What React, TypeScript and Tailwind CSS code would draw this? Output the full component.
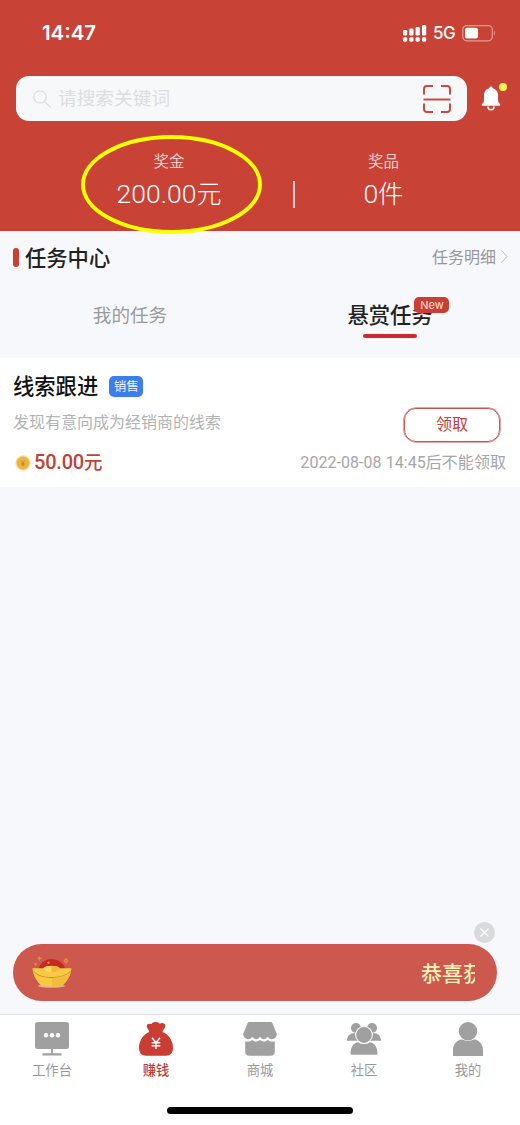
import React from "react";

const font = "font-[Inter,'Noto_Sans_CJK_SC',sans-serif]";
const numberFont = "font-[Roboto,'Noto_Sans_CJK_SC',sans-serif]";

const StatusIcons: React.FC = () => (
  <div className="flex items-center">
    <svg width="24" height="17" viewBox="0 0 24 17" fill="#fff">
      <rect x="0" y="5" width="4.200" height="5.500" rx="1.200" />
      <rect x="6.300" y="3.500" width="4.200" height="7" rx="1.200" />
      <rect x="12.600" y="2" width="4.200" height="8.500" rx="1.200" />
      <rect x="19" y="0" width="4.200" height="10.500" rx="1.200" />
      <rect x="0" y="12.200" width="4.200" height="4.500" rx="1.400" />
      <rect x="6.300" y="12.200" width="4.200" height="4.500" rx="1.400" />
      <rect x="12.600" y="12.200" width="4.200" height="4.500" rx="1.400" />
      <rect x="19" y="12.200" width="4.200" height="4.500" rx="1.400" />
    </svg>
    <span className="ml-[6px] w-[23px] text-[17px] leading-5 font-medium tracking-[-0.500px]">5G</span>
    <svg className="ml-[6px]" width="34" height="17" viewBox="0 0 34 17">
      <rect x="0.800" y="0.600" width="29.500" height="15.200" rx="4" fill="none" stroke="#e39d95" strokeWidth="1.200" />
      <rect x="3" y="2.800" width="13" height="10.800" rx="2" fill="#fff" />
      <path d="M32 5.600q2 2.700 0 5.200z" fill="#e39d95" />
    </svg>
  </div>
);

const ScanIcon: React.FC = () => (
  <svg width="28" height="28" viewBox="0 0 28 28" fill="none" stroke="#c84a40" strokeWidth="2">
    <path d="M1 9.500V4q0-3 3-3h6M18 1h6q3 0 3 3v5.500M1 18.500V24q0 3 3 3h6M18 27h6q3 0 3-3v-5.500M0.500 14.500h27" />
  </svg>
);

const BellIcon: React.FC = () => (
  <svg width="20" height="26" viewBox="0 0 20 26" fill="#fff">
    <path d="M10 0.500c1 0 1.700.7 1.700 1.700 3.500.8 5.300 3.700 5.300 7.300v5c0 2.200 2.300 3.300 2.300 4.500 0 .5-.3.800-.9.800H1.600c-.6 0-.9-.3-.9-.8 0-1.200 2.300-2.300 2.300-4.500v-5c0-3.600 1.800-6.500 5.300-7.300 0-1 .7-1.700 1.700-1.700z" />
    <path d="M7 20.500a3 3.300 0 0 0 6 0" fill="none" stroke="#fff" strokeWidth="1.600" />
  </svg>
);

const CoinIcon: React.FC = () => (
  <svg width="16" height="16" viewBox="0 0 16 16">
    <circle cx="8" cy="8" r="7.700" fill="#fae3a0" />
    <circle cx="8" cy="8" r="6.500" fill="#ebb443" />
    <path d="M6.200 5.500l1.800 2.300 1.800-2.300M8 7.800V11M6.500 8.300h3M6.500 9.700h3" stroke="#bc7c20" strokeWidth="0.800" fill="none" />
  </svg>
);

const IngotIcon: React.FC = () => (
  <svg width="40" height="34" viewBox="0 0 40 34">
    <ellipse cx="19.500" cy="30" rx="13.500" ry="1.700" fill="#dcaaa6" />
    <path d="M6 14C8 7 13 3 19.500 3S32 7 33.500 14z" fill="#c42a20" />
    <path d="M0.500 12.200H11C14 9 25 9 28 12.200H39.300C39.300 18 36 25 29 30.500H10.500C4 25 0.500 18 0.500 12.200z" fill="#f8c942" />
    <path d="M11 12.500C14 9 25 9 28 12.500c-2 5-15 5-17 0z" fill="#fcd75b" />
    <path d="M19.500 10c5 0 7 1 8.500 2.500-1 2.500-4 3.500-8.500 4z" fill="#f2b63a" />
    <path d="M1 14.500C8 23.300 31 23.300 39 14.500v1C31 24 8 24 1.300 15.500z" fill="#c98a28" />
    <path d="M20 22c7 0 13-2 18.500-5.500C37 22 34 26.500 29 30.500h-9z" fill="#f3bd3c" />
    <g fill="none" stroke="#e58e36" strokeWidth="1.300">
      <path d="M7.500 0.500v4M5.500 2.500h4M3.500 7v2.500M2.200 8.200h2.600M16.500 5.500v2.500M15.200 6.700h2.600" />
      <path d="M34 2.700l1.800 2-1.800 2-1.800-2z" />
    </g>
  </svg>
);

const DeskIcon: React.FC = () => (
  <svg width="34" height="34" viewBox="0 0 34 34" fill="#a0a0a0">
    <rect width="34" height="27" rx="2.500" />
    <path d="M16 26h2v5.300h8.500V33.500H7.500V31.300H16z" />
    <g fill="#fff">
      <circle cx="11" cy="13.200" r="2.200" />
      <circle cx="17" cy="13.200" r="2.200" />
      <circle cx="23" cy="13.200" r="2.200" />
    </g>
  </svg>
);

const MoneyIcon: React.FC = () => (
  <svg width="34" height="34" viewBox="0 0 34 34">
    <path
      d="M10.300 10C10 7.500 7.500 6.300 7.700 4 7.900 1.800 10.300 1.200 12.500 2 14-.5 19-.5 20.800 1.800 23 .3 26.500 1.300 26.300 4 26.200 6.500 23.900 7.500 23.500 10 30 12.500 34 19 34 25.500 34 31 31.500 33.700 27 33.700H7C2.500 33.700 0 31 0 25.500 0 19 4 12.500 10.300 10z"
      fill="#c93d32"
    />
    <path d="M13 15.800l4 5 4-5M17 20.800v6.200M12.700 20.800h8.600M12.700 23.800h8.600" stroke="#fff" strokeWidth="1.400" fill="none" />
  </svg>
);

const ShopIcon: React.FC = () => (
  <svg width="34" height="34" viewBox="0 0 34 34" fill="#a0a0a0">
    <path d="M6.500 0h21q1.500 0 2 1.200L33.700 11.500C34 15 31.500 17.200 29 17.200q-2.500 0-4.300-2.500Q23 17.200 20.800 17.200T17 14.700Q15.400 17.200 13.200 17.200T9.300 14.700Q7.500 17.200 5 17.200C2.500 17.200 0 15 .3 11.500L4.500 1.200Q5 0 6.500 0z" />
    <path d="M2.200 19.200q4 1.300 7-1.200 3.800 3.200 7.800 0 4 3.200 7.800 0 3 2.500 7 1.200V29.500q0 4.300-4.300 4.300h-21q-4.300 0-4.300-4.300z" />
  </svg>
);

const GroupIcon: React.FC = () => (
  <svg width="34" height="34" viewBox="0 0 34 34" fill="#a0a0a0">
    <circle cx="9" cy="6" r="5" />
    <circle cx="25" cy="6" r="5" />
    <path d="M0 18.800C0 14 3 11 8 11l3 7.800zM34 18.800C34 14 31 11 26 11l-3 7.800z" />
    <circle cx="17" cy="13" r="8.900" fill="#fff" />
    <circle cx="17" cy="13" r="7.900" />
    <path d="M3.500 31.500C3.500 25 7 20.500 11 20.200q6 3.800 12 0c4 .3 7.500 4.800 7.500 11.300q0 1.200-1.200 1.200H4.700q-1.200 0-1.200-1.200z" />
  </svg>
);

const UserIcon: React.FC = () => (
  <svg width="34" height="34" viewBox="0 0 34 34" fill="#a0a0a0">
    <circle cx="17" cy="9.200" r="9.200" />
    <path d="M2 34V28C2 22 6 18 11 17.500q6 2.800 12 0C28 18 32 22 32 28v6z" />
  </svg>
);

const navItems = [
  { label: "工作台", icon: <DeskIcon /> },
  { label: "赚钱", icon: <MoneyIcon />, active: true },
  { label: "商城", icon: <ShopIcon /> },
  { label: "社区", icon: <GroupIcon /> },
  { label: "我的", icon: <UserIcon /> },
];

const Header: React.FC = () => (
  <header className="h-[231px] bg-[#c84235] text-white">
    <div className="flex h-[76px] items-start justify-between pt-[23px] pr-[24px] pl-[42px]">
      <span className="text-[20.400px] leading-5 font-semibold">14:47</span>
      <StatusIcons />
    </div>

    <div className="flex h-[45px] items-center pl-4">
      <div className="flex h-[45px] w-[451px] items-center rounded-[13px] bg-[#f7f8fa] pr-4 pl-[17px]">
        <svg width="18" height="18" viewBox="0 0 18 18" fill="none" stroke="#dcdde0" strokeWidth="1.300">
          <circle cx="7" cy="7" r="6.200" />
          <path d="M11.500 11.500l6 6" />
        </svg>
        <span className="ml-[7px] flex-1 text-[18.700px] leading-6 text-[#dcdde0]">请搜索关键词</span>
        <ScanIcon />
      </div>
      <div className="relative ml-[14px]">
        <BellIcon />
        <span className="absolute -top-[3px] left-[18px] h-2 w-2 rounded-full bg-[#fdf551]" />
      </div>
    </div>

    <div className="relative flex h-[110px] pt-[31px]">
      <div className="ml-[69px] w-[200px] text-center">
        <p className="text-[15.500px] leading-5 text-[#f2cfcb]">奖金</p>
        <p className={`mt-[6px] text-[26.500px] leading-8 font-light ${numberFont}`}>
          200.00<span className="text-[25px]">元</span>
        </p>
      </div>
      <div className="mt-[29px] ml-6 h-[27px] w-[1.500px] bg-[#f0d0cc]" />
      <div className="ml-[-11px] w-[200px] text-center">
        <p className="text-[15.500px] leading-5 text-[#f2cfcb]">奖品</p>
        <p className={`mt-[6px] text-[26.500px] leading-8 font-light ${numberFont}`}>
          0<span className="text-[25.500px]">件</span>
        </p>
      </div>
      <svg className="absolute top-[14px] left-[80px]" width="184" height="100" viewBox="0 0 184 100">
        <ellipse cx="91.500" cy="49.500" rx="88.500" ry="47.500" fill="none" stroke="#ffff00" strokeWidth="4" />
      </svg>
    </div>
  </header>
);

const App: React.FC = () => {
  return (
    <div className={`flex h-[1125px] w-[520px] flex-col overflow-hidden bg-[#f7f8fc] whitespace-nowrap ${font}`}>
      <Header />

      <div className="flex h-[53px] items-center justify-between pr-3 pl-[13px]">
        <div className="flex items-center">
          <span className="h-[19px] w-[6px] rounded-full bg-[#cc3d32]" />
          <h2 className="ml-[6px] text-[21.300px] leading-6 font-medium text-[#222]">任务中心</h2>
        </div>
        <div className="flex items-center pb-[2px] text-[16px] leading-5 text-[#979797]">
          任务明细
          <svg className="ml-[5px]" width="7" height="13" viewBox="0 0 7 13" fill="none" stroke="#b9b9b9">
            <path d="M0.500 0.500l5.500 6-5.500 6" />
          </svg>
        </div>
      </div>

      <div className="flex h-[74px]">
        <div className="flex w-[260px] justify-center pt-[19px] text-[18.600px] leading-6 text-[#9a9a9a]">我的任务</div>
        <div className="flex w-[260px] flex-col items-center pt-[19px]">
          <div className="relative text-[21.300px] leading-6 font-medium text-[#222]">
            悬赏任务
            <span className="absolute -top-[6px] left-[67px] h-4 w-[35px] rounded-[5px] bg-[#cc3d32] text-center text-[11px] leading-[17px] font-normal text-[#fbe5e3]">
              New
            </span>
          </div>
          <div className="mt-[7px] h-[4px] w-[54px] rounded-full bg-[#cb2b31]" />
        </div>
      </div>

      <div className="flex h-[129px] flex-col bg-white pr-[14px] pl-[13px]">
        <div className="flex items-center pt-4">
          <h3 className="text-[21.300px] leading-6 font-medium text-[#111]">线索跟进</h3>
          <span className="ml-[11px] h-[21px] w-[34px] rounded-[5px] bg-[#3d7eee] text-center text-[12.500px] leading-[21px] text-[#eaf2ff]">
            销售
          </span>
        </div>
        <div className="flex h-11 justify-between pt-[10px]">
          <p className="pt-1 text-[16px] leading-5 text-[#b3b3b3]">发现有意向成为经销商的线索</p>
          <button className="mr-[6px] h-[34px] w-[96px] rounded-[12px] border-[1.500px] border-[#c6554d] pb-[3px] text-[16px] leading-5 text-[#c0413a] ring-[0.500px] ring-[#c6554d]">
            领取
          </button>
        </div>
        <div className="flex items-center justify-between pt-2">
          <div className="flex items-center pl-[2px]">
            <CoinIcon />
            <span className={`ml-[3px] text-[20px] leading-6 font-medium tracking-[-0.200px] text-[#bd4239] ${numberFont}`}>
              50.00<span className="text-[18.500px]">元</span>
            </span>
          </div>
          <span className={`text-[16px] leading-5 tracking-[0.050px] text-[#a6a6a6] ${numberFont}`}>
            2022-08-08 14:45后不能领取
          </span>
        </div>
      </div>

      <div className="flex-1" />

      <div className="relative mb-[13px] ml-[13px] flex h-[57px] w-[484px] items-center rounded-full bg-[#cd584e] pl-[19px]">
        <IngotIcon />
        <div className="ml-[349px] w-[54px] overflow-hidden pt-[2px] text-[21px] leading-8 font-medium text-[#fdf3b8]">恭喜获得</div>
        <button className="absolute -top-[22px] left-[461px] flex h-[21px] w-[21px] items-center justify-center rounded-full bg-[#d9dadb]">
          <svg width="9" height="9" viewBox="0 0 9 9" stroke="#fff" strokeWidth="1.300">
            <path d="M0.500 0.500l8 8M8.500 0.500l-8 8" />
          </svg>
        </button>
      </div>

      <nav className="flex h-[111px] flex-col items-center border-t-[1.500px] border-[#e1e2e6] bg-white">
        <div className="flex w-full pt-[7px]">
          {navItems.map((item) => (
            <div key={item.label} className="flex flex-1 flex-col items-center">
              {item.icon}
              <span
                className={
                  item.active
                    ? "mt-[4px] text-[13.300px] leading-5 font-medium text-[#c23b31]"
                    : "mt-[4px] text-[13.300px] leading-5 text-[#999]"
                }
              >
                {item.label}
              </span>
            </div>
          ))}
        </div>
        <div className="mt-auto mb-[11px] h-[7px] w-[186px] rounded-full bg-black" />
      </nav>
    </div>
  );
};

export default App;
